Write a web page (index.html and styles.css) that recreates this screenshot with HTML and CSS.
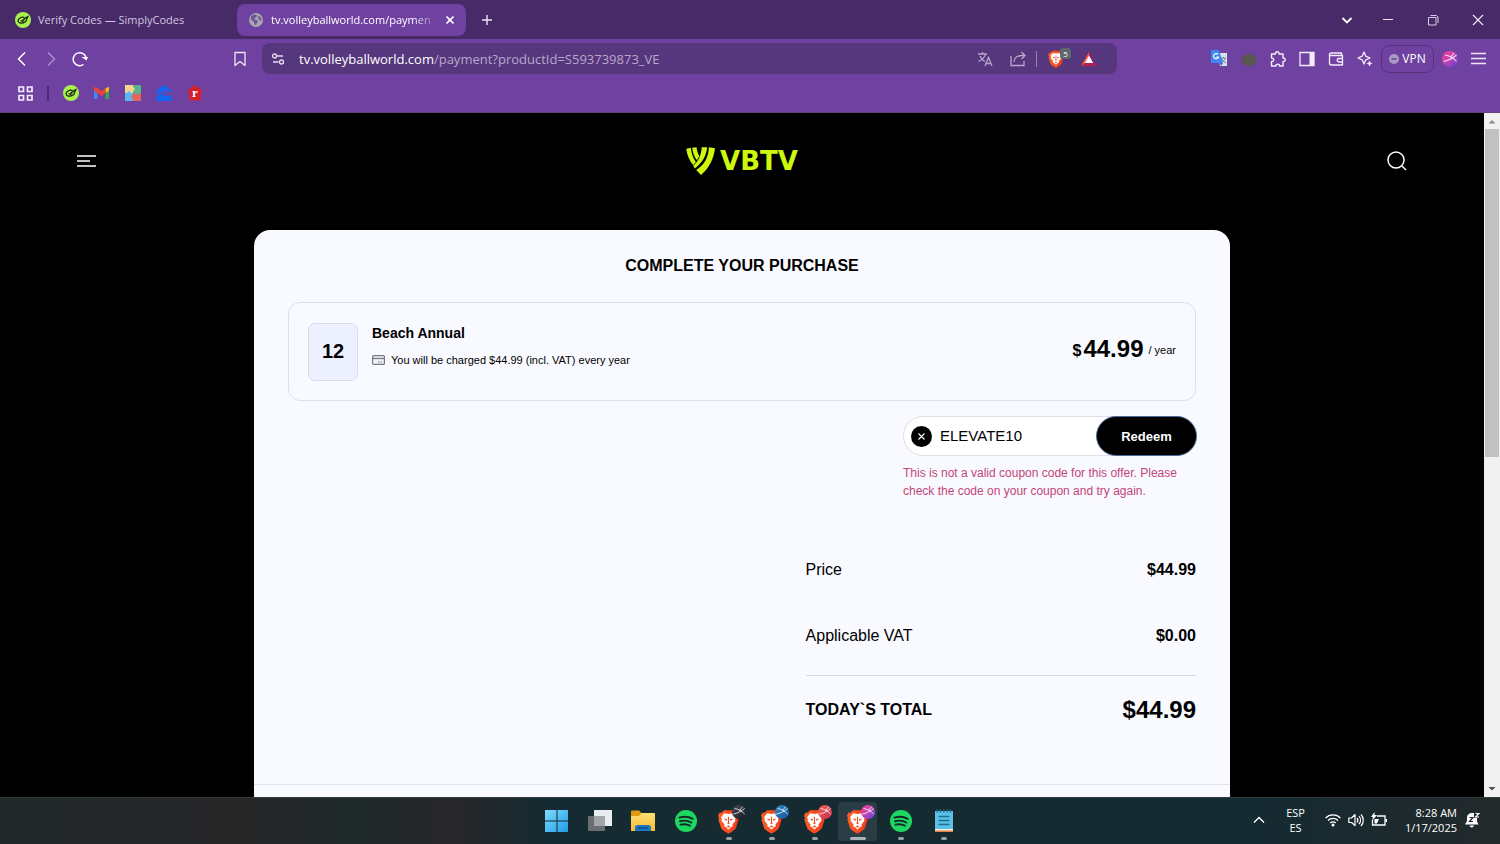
FILE: index.html
```
<!DOCTYPE html>
<html lang="en">
<head>
    <meta charset="UTF-8">
    <meta name="viewport" content="width=device-width, initial-scale=1.0">
    <title>Complete your purchase - VBTV</title>
    <link rel="stylesheet" href="styles.css">
</head>
<body>

<!-- Shared icons -->
<svg class="defs" width="0" height="0">
    <defs>
        <linearGradient id="g-win" x1="0" y1="0" x2="1" y2="1"><stop offset="0" stop-color="#7fdcfb"/><stop offset="1" stop-color="#1f9cea"/></linearGradient>
        <linearGradient id="g-folder" x1="0" y1="0" x2="0" y2="1"><stop offset="0" stop-color="#ffdf75"/><stop offset="1" stop-color="#f7bd2c"/></linearGradient>
        <linearGradient id="g-brave" x1="0" y1="0" x2="1" y2="0"><stop offset="0" stop-color="#ff6021"/><stop offset="1" stop-color="#f0381c"/></linearGradient>
        <linearGradient id="g-black" x1="0" y1="0" x2="1" y2="1"><stop offset="0" stop-color="#4b4c57"/><stop offset="1" stop-color="#17181f"/></linearGradient>
        <linearGradient id="g-blue" x1="0" y1="0" x2="1" y2="1"><stop offset="0" stop-color="#2c8fc0"/><stop offset="1" stop-color="#1c4f9c"/></linearGradient>
        <linearGradient id="g-red" x1="0" y1="0" x2="1" y2="1"><stop offset="0" stop-color="#f0654b"/><stop offset="1" stop-color="#c52e55"/></linearGradient>
        <linearGradient id="g-pink" x1="0" y1="0" x2="1" y2="1"><stop offset="0" stop-color="#fb3f8b"/><stop offset=".45" stop-color="#c843b0"/><stop offset="1" stop-color="#5743dd"/></linearGradient>
        <symbol id="brave" viewBox="0 0 24 28">
            <path fill="url(#g-brave)" d="M7 1h10l3 3 2-.3L24 7l-1 3 .5 2-3 9.500c-.5 1.500-5.500 5-8.500 6.500C9 26.500 4 23 3.500 21.500L.5 12 1 10 0 7l2-3.300L4 4z"/>
            <path fill="#fff" d="M12 5.500l5-.8 3.500 4.300-1 2.500.5 1.500-3.500 4.500.5 2-2.500 1-2.500 3-2.500-3-2.500-1 .5-2L4 13l.5-1.500-1-2.500L7 4.700z"/>
            <path fill="#f4481e" d="M6.500 10.500l4 1-1 2zM17.500 10.500l-4 1 1 2zM11.300 8.500h1.400l-.2 6 1 1.500-1.500 1-1.500-1 1-1.500zM10 19.500l2-.8 2 .8-2 1.500z"/>
        </symbol>
        <symbol id="spotify" viewBox="0 0 24 24">
            <circle cx="12" cy="12" r="12" fill="#1ed760"/>
            <path d="M4.800 8.300c5-1.500 10.500-1 14.500 1.300M5.500 12.300c4.300-1.200 8.800-.7 12.300 1.300M6 16c3.500-.9 7-.6 10.200 1.100" fill="none" stroke="#12272a" stroke-width="2.100" stroke-linecap="round"/>
        </symbol>
        <symbol id="simplycodes" viewBox="0 0 16 16">
            <circle cx="8" cy="8" r="8" fill="#a8f04d"/>
            <path d="M9 5.300C6 4.800 3.300 6.500 3.100 8.600s3 3 5 2.300 3.400-2 3.400-3.500M6 8.700l1.500.8L9 7.500M8 7.700l5-3.400-1.200 2.700" fill="none" stroke="#1c2b12" stroke-width="1.300" stroke-linecap="round" stroke-linejoin="round"/>
        </symbol>
        <symbol id="ball" viewBox="0 0 16 16">
            <path d="M1.500 10.500C6 9.500 11 7 14.500 4M3 4c4 .5 8.500 3 11.500 6.500M8.500 6.500L12 2" fill="none" stroke="#fff" stroke-width="1.100" opacity=".8"/>
        </symbol>
    </defs>
</svg>

<header class="browser">
    <div class="tabs">
        <button class="tab" type="button">
            <svg width="16" height="16"><use href="#simplycodes"/></svg>
            <span class="tab-title">Verify Codes — SimplyCodes</span>
        </button>
        <div class="tab active">
            <svg width="14" height="14" viewBox="0 0 14 14"><circle cx="7" cy="7" r="7" fill="#a9a5b5"/><path d="M2 3l3-1.500 3 .5-.5 2-2 1v1.500L8 7l1 1.500-2 3-1.500.5-.5-3-3-2.500zM10 2.500l2.500 3-.5 2.500-2-1.500-1-2z" fill="#6e5790"/></svg>
            <span class="tab-title">tv.volleyballworld.com/paymen</span>
            <button class="tab-close" type="button" aria-label="Close tab"><svg width="8" height="8" viewBox="0 0 8 8"><path d="M.5.500l7 7M7.500.500l-7 7" stroke="#fff" stroke-width="1.600"/></svg></button>
        </div>
        <button class="icon-btn new-tab" type="button" aria-label="New tab"><svg width="12" height="12" viewBox="0 0 12 12"><path d="M6 1v10M1 6h10" stroke="#eee6f7" stroke-width="1.400"/></svg></button>
        <div class="window-controls">
            <button type="button" aria-label="Search tabs"><svg width="12" height="12" viewBox="0 0 12 12"><path d="M1.500 4L6 8.500 10.500 4" fill="none" stroke="#fff" stroke-width="1.800"/></svg></button>
            <button type="button" aria-label="Minimize"><svg width="12" height="12" viewBox="0 0 12 12"><path d="M1 5.500h10" stroke="#eee6f7"/></svg></button>
            <button type="button" aria-label="Restore"><svg width="12" height="12" viewBox="0 0 12 12"><path d="M3.500 1.500h6l1.500 1.500v6M1.500 3.500h7.500v7.500h-7.500z" fill="none" stroke="#d9cce8" stroke-linejoin="round"/></svg></button>
            <button type="button" aria-label="Close"><svg width="12" height="12" viewBox="0 0 12 12"><path d="M1 1l10 10M11 1L1 11" stroke="#eee6f7" stroke-width="1.200"/></svg></button>
        </div>
    </div>

    <div class="toolbar">
        <div class="nav-buttons">
            <button class="icon-btn" type="button" aria-label="Back"><svg width="16" height="16" viewBox="0 0 16 16"><path d="M11 1.500L4.500 8l6.500 6.500" fill="none" stroke="#fff" stroke-width="1.500"/></svg></button>
            <button class="icon-btn" type="button" aria-label="Forward"><svg width="16" height="16" viewBox="0 0 16 16"><path d="M5 1.500L11.500 8 5 14.500" fill="none" stroke="#a98dc9" stroke-width="1.500"/></svg></button>
            <button class="icon-btn" type="button" aria-label="Reload"><svg width="16" height="16" viewBox="0 0 16 16"><path d="M11.500 13.500A6.500 6.500 0 1 1 14 6.500" fill="none" stroke="#fff" stroke-width="1.500"/><path d="M9.500 6h6.500L14.500 9.500z" fill="#fff"/></svg></button>
            <button class="icon-btn bookmark" type="button" aria-label="Bookmark this page"><svg width="16" height="16" viewBox="0 0 16 16"><path d="M3 1.500h10v13l-5-4-5 4z" fill="none" stroke="#eee6f7" stroke-width="1.300" stroke-linejoin="round"/></svg></button>
        </div>
        <div class="address">
            <button class="icon-btn" type="button" aria-label="Site settings"><svg width="14" height="14" viewBox="0 0 14 14"><g fill="none" stroke="#e6dcf0" stroke-width="1.300"><circle cx="3.500" cy="4" r="2"/><path d="M6 4h6M2 10h5.500"/><circle cx="10.500" cy="10" r="2"/></g></svg></button>
            <a class="url" href="#">tv.volleyballworld.com<span>/payment?productId=S593739873_VE</span></a>
            <div class="address-actions">
                <button class="icon-btn" type="button" aria-label="Translate"><svg width="16" height="16" viewBox="0 0 16 16"><path d="M1 3h9M5.500 1v2M8.500 3C8 6 4.500 9 1.500 10.500M3 5c1 2.500 3 4.500 5 5.500M8 15l3.500-8.500L15 15M9 12.500h5" fill="none" stroke="#b9a8cc" stroke-width="1.300"/></svg></button>
                <button class="icon-btn" type="button" aria-label="Share"><svg width="16" height="16" viewBox="0 0 16 16"><path d="M1 5v9.500h13V10M4 11c0-4 3-6.500 8-6.500h3M11.500 1L15 4.500 11.500 8" fill="none" stroke="#b9a8cc" stroke-width="1.300"/></svg></button>
                <span class="divider"></span>
                <button class="icon-btn shield" type="button" aria-label="Brave Shields"><svg width="16" height="18"><use href="#brave"/></svg><span class="badge">5</span></button>
                <button class="icon-btn" type="button" aria-label="Brave Rewards"><svg width="16" height="14" viewBox="0 0 16 14"><path d="M8 0l8 14H0z" fill="#8f2170"/><path d="M0 14h16l-4-3H4z" fill="#b31d55"/><path d="M0 14l4-3 4-7V0z" fill="#ff5a2b"/><path d="M8 3.500l4.200 7.500H3.800z" fill="#fff"/></svg></button>
            </div>
        </div>
        <div class="extensions">
            <button class="icon-btn" type="button" aria-label="Google Translate"><svg width="17" height="17" viewBox="0 0 17 17"><path d="M7 3h9v13H9z" fill="#dce2ea"/><path d="M10 8h5M12.500 7v1M14 8c0 2-2 4-4 5M11 9c1 2 2 3 4 4" stroke="#66809a" fill="none"/><path d="M0 0h8l4 13H0z" fill="#4285f4"/><path d="M9 13h3l-2 3z" fill="#2859b8"/><path d="M7 4.500A2.500 2.500 0 1 0 7.500 7H5.200" fill="none" stroke="#fff" stroke-width="1.200"/></svg></button>
            <button class="icon-btn" type="button" aria-label="Extension"><svg width="16" height="16" viewBox="0 0 16 16"><path d="M7.500 4V1h1v3c4-1.500 7.500.5 7 5S12 15 8 15 .800 13 .500 9s3-6.500 7-5z" fill="#59554f"/><path d="M4 8l2 1M12 8l-2 1M5 12h6" stroke="#68604c"/></svg></button>
            <button class="icon-btn" type="button" aria-label="Extensions"><svg width="16" height="16" viewBox="0 0 16 16"><path d="M1.500 3h4c-.5-3 4-3 3.500 0h4v4c3-.5 3 4 0 3.500V15H9.500c.3-2.500-3.700-2.500-3.500 0H1.500v-4.500c3 .3 3-3.700 0-3.500z" fill="none" stroke="#f4ecfb" stroke-width="1.400" stroke-linejoin="round"/></svg></button>
            <button class="icon-btn" type="button" aria-label="Side panel"><svg width="16" height="16" viewBox="0 0 16 16"><path d="M1 1.500h14v13H1z" fill="none" stroke="#f4ecfb" stroke-width="1.300"/><path d="M10.500 1.500H15v13h-4.500z" fill="#f4ecfb"/></svg></button>
            <button class="icon-btn" type="button" aria-label="Wallet"><svg width="16" height="16" viewBox="0 0 16 16"><path d="M1.500 4.500V12c0 1.500.5 2 2 2h11v-9.500zM1.500 4.500c-.5-2 .5-2.500 2-2.500h10v2.500M15 7.500h-4c-2.500 0-2.500 3.500 0 3.500h4" fill="none" stroke="#f4ecfb" stroke-width="1.300" stroke-linejoin="round"/></svg></button>
            <button class="icon-btn" type="button" aria-label="Leo AI"><svg width="16" height="16" viewBox="0 0 16 16"><path d="M7 1l1.800 4.200L13 7 8.800 8.800 7 13 5.200 8.800 1 7l4.200-1.800z" fill="none" stroke="#f4ecfb" stroke-width="1.300" stroke-linejoin="round"/><path d="M12.500 9.500l.9 2.100 2.100.9-2.100.9-.9 2.100-.9-2.100-2.100-.9 2.100-.9z" fill="#f4ecfb"/></svg></button>
            <button class="vpn" type="button"><svg width="10" height="10" viewBox="0 0 10 10"><circle cx="5" cy="5" r="5" fill="#a99bc4"/><path d="M2.500 5h5" stroke="#5e3b86" stroke-width="1.400"/></svg>VPN</button>
            <button class="icon-btn" type="button" aria-label="Profile"><svg width="16" height="16" viewBox="0 0 16 16"><circle cx="8" cy="8" r="8" fill="url(#g-pink)"/><use href="#ball" width="16" height="16"/></svg></button>
            <button class="icon-btn" type="button" aria-label="Menu"><svg width="15" height="13" viewBox="0 0 15 13"><path d="M0 1.500h15M0 6.500h15M0 11.500h15" stroke="#eee6f7" stroke-width="1.300"/></svg></button>
        </div>
    </div>

    <nav class="bookmarks">
        <a href="#" aria-label="All bookmarks"><svg width="15" height="15" viewBox="0 0 15 15"><path d="M1 1h4.500v4.500H1zM9.500 1H14v4.500H9.500zM1 9.500h4.500V14H1zM9.500 9.500H14V14H9.500z" fill="none" stroke="#f4ecfb" stroke-width="1.700"/></svg></a>
        <span class="divider"></span>
        <a href="#" aria-label="SimplyCodes"><svg width="16" height="16"><use href="#simplycodes"/></svg></a>
        <a href="#" aria-label="Gmail"><svg width="15" height="12" viewBox="0 0 15 12"><path d="M0 1.500l3.500 2.500v8H0z" fill="#4285f4"/><path d="M15 1.500L11.500 4v8H15z" fill="#34a853"/><path d="M11.500 1L15 0v3.500L11.500 6z" fill="#fbbc04"/><path d="M0 0l3.500 1 4 3.200 4-3.200v5l-4 3-4-3L0 3.500z" fill="#ea4335"/></svg></a>
        <a href="#" aria-label="Puzzles"><svg width="16" height="16" viewBox="0 0 16 16"><path d="M0 0h8v8H0z" fill="#f6d58b"/><path d="M8 0h8v8H8z" fill="#56b68b"/><path d="M0 8h8v8H0z" fill="#5bb8f5"/><path d="M8 8h8v8H8z" fill="#e8645a"/><circle cx="8" cy="4" r="1.800" fill="#f6d58b"/><circle cx="12" cy="8" r="1.800" fill="#56b68b"/><circle cx="8" cy="12" r="1.800" fill="#e8645a"/><circle cx="4" cy="8" r="1.800" fill="#5bb8f5"/></svg></a>
        <a href="#" aria-label="Zillow"><svg width="16" height="16" viewBox="0 0 16 16"><path d="M8 0l7.500 5.500V8L11 5.500C7.500 6 4 7.500.500 9.500V5.500zM.5 11.500C4 9 7 7.500 10 7l-3.500 4.500c3-1 6-1.300 9-.8V16H.5z" fill="#1267f2"/></svg></a>
        <a href="#" aria-label="Redfin"><svg width="16" height="16" viewBox="0 0 16 16"><path d="M8 0l7.500 5.500V7H14v8.500H2V7H.5V5.500z" fill="#d4222c"/><text x="5" y="12" class="redfin-r">r</text></svg></a>
    </nav>
</header>

<div class="viewport">
    <main class="page">
        <div class="site-header">
            <button class="site-btn" type="button" aria-label="Open menu"><svg width="20" height="12" viewBox="0 0 20 12"><path d="M0 1h19M0 6h13M0 11h19" stroke="#fff" stroke-width="1.600"/></svg></button>
            <a class="logo" href="#">
                <svg width="30" height="28" viewBox="0 0 86 82"><path fill="#cdf80d" d="M0 5l13-3c2 17 7 30 15 42l-8 9C8 38 2 23 0 5zM17 2l13-1c1 10 4 18 8 25l-7 13C23 28 19 16 17 2zM45 1h16c-2 24-13 43-30 57l-6 5-5-8C35 43 44 24 45 1zM66 1l18 3c-4 32-17 58-41 78l-14-15C52 54 65 31 66 1z"/></svg>
                <span>VBTV</span>
            </a>
            <button class="site-btn" type="button" aria-label="Search"><svg width="20" height="20" viewBox="0 0 20 20"><circle cx="9" cy="9" r="8" fill="none" stroke="#fff" stroke-width="1.500"/><path d="M15 15l4 4" stroke="#fff" stroke-width="1.500"/></svg></button>
        </div>

        <section class="card">
            <div class="card-body">
                <h1>COMPLETE YOUR PURCHASE</h1>

                <div class="product">
                    <div class="months">12</div>
                    <div class="product-info">
                        <h2>Beach Annual</h2>
                        <p><svg width="13" height="10" viewBox="0 0 13 10"><rect x=".6" y=".6" width="11.800" height="8.800" rx="1" fill="#f3f4fa" stroke="#777986" stroke-width="1.200"/><path d="M1 3.500h11" stroke="#777986" stroke-width="1.300"/><path d="M6 7h1.500M8.500 7H10" stroke="#777986"/></svg>You will be charged $44.99 (incl. VAT) every year</p>
                    </div>
                    <div class="product-price"><span class="currency">$</span><strong>44.99</strong><span class="period">/ year</span></div>
                </div>

                <form class="coupon" id="coupon-form">
                    <div class="coupon-field">
                        <button class="clear" type="button" aria-label="Clear coupon"><svg width="7" height="7" viewBox="0 0 7 7"><path d="M.5.500l6 6M6.500.500l-6 6" stroke="#fff" stroke-width="1.100"/></svg></button>
                        <input type="text" id="coupon" name="coupon" value="ELEVATE10" aria-label="Coupon code" spellcheck="false">
                        <button class="redeem" type="submit">Redeem</button>
                    </div>
                    <p class="error">This is not a valid coupon code for this offer. Please check the code on your coupon and try again.</p>
                </form>

                <dl class="summary">
                    <div class="row"><dt>Price</dt><dd>$44.99</dd></div>
                    <div class="row"><dt>Applicable VAT</dt><dd>$0.00</dd></div>
                    <div class="row total"><dt>TODAY`S TOTAL</dt><dd>$44.99</dd></div>
                </dl>
            </div>
            <div class="card-footer"></div>
        </section>
    </main>
    <div class="scrollbar">
        <svg width="16" height="16" viewBox="0 0 16 16"><path d="M4.500 10.500L8 7l3.500 3.500z" fill="#8b8b8b"/></svg>
        <div class="thumb"></div>
        <svg width="16" height="16" viewBox="0 0 16 16"><path d="M4.500 6L8 9.500 11.500 6z" fill="#505050"/></svg>
    </div>
</div>

<footer class="taskbar">
    <div class="apps">
        <button type="button" aria-label="Start"><svg width="24" height="24" viewBox="0 0 24 24"><path d="M0 1h11.500v10.500H0zM12.500 1H23v10.500H12.500zM0 12.500h11.500V23H0zM12.500 12.500H23V23H12.500z" fill="url(#g-win)"/></svg></button>
        <button type="button" aria-label="Task view"><svg width="24" height="24" viewBox="0 0 24 24"><path d="M6 1h18v16H6z" fill="#e9edef"/><path d="M0 7h17v15H0z" fill="#6c6f72"/><path d="M6 7h11v10H6z" fill="#a3a6a8"/></svg></button>
        <button type="button" aria-label="File Explorer"><svg width="24" height="24" viewBox="0 0 24 24"><path d="M0 3c0-1 .5-1.500 1.500-1.500H8L10.500 4H22v5H0z" fill="#dd9a12"/><path d="M0 7h8l2.500-3H23c.7 0 1 .5 1 1v17H0z" fill="url(#g-folder)"/><path d="M4 22v-3.500c0-1.500 1-2.500 2.500-2.500h11c1.500 0 2.500 1 2.500 2.500V22z" fill="#1975c5"/><path d="M7 19h10" stroke="#0c4d8c" stroke-width="1.500"/></svg></button>
        <button type="button" aria-label="Spotify"><svg width="22" height="22"><use href="#spotify"/></svg></button>
        <button type="button" class="running" aria-label="Brave, profile 1"><svg width="34" height="32" viewBox="0 0 34 32"><use href="#brave" x="6" y="4" width="21" height="25"/><circle cx="27" cy="7" r="7" fill="url(#g-black)"/><use href="#ball" x="20" y="0" width="14" height="14"/></svg></button>
        <button type="button" class="running" aria-label="Brave, profile 2"><svg width="34" height="32" viewBox="0 0 34 32"><use href="#brave" x="6" y="4" width="21" height="25"/><circle cx="27" cy="7" r="7" fill="url(#g-blue)"/><use href="#ball" x="20" y="0" width="14" height="14"/></svg></button>
        <button type="button" class="running" aria-label="Brave, profile 3"><svg width="34" height="32" viewBox="0 0 34 32"><use href="#brave" x="6" y="4" width="21" height="25"/><circle cx="27" cy="7" r="7" fill="url(#g-red)"/><use href="#ball" x="20" y="0" width="14" height="14"/></svg></button>
        <button type="button" class="running current" aria-label="Brave, profile 4"><svg width="34" height="32" viewBox="0 0 34 32"><use href="#brave" x="6" y="4" width="21" height="25"/><circle cx="27" cy="7" r="7" fill="url(#g-pink)"/><use href="#ball" x="20" y="0" width="14" height="14"/></svg></button>
        <button type="button" class="running" aria-label="Spotify"><svg width="22" height="22"><use href="#spotify"/></svg></button>
        <button type="button" class="running" aria-label="Notepad"><svg width="20" height="24" viewBox="0 0 20 24"><path d="M1 2h18v20H1z" fill="#5ac1e4"/><path d="M1 20h18v2H1z" fill="#f0efec"/><path d="M1 21.500h18V23H1z" fill="#e2803c"/><path d="M2.500 2h15" stroke="#256f96" stroke-width="3" stroke-dasharray="1.500 1.800"/><path d="M4.500 7.500h11M4.500 11.500h11M4.500 15.500h11" stroke="#1d6d98" stroke-width="1.500"/></svg></button>
    </div>
    <div class="tray">
        <button type="button" aria-label="Hidden icons"><svg width="12" height="12" viewBox="0 0 12 12"><path d="M1 8.500l5-5 5 5" fill="none" stroke="#fff" stroke-width="1.400"/></svg></button>
        <button type="button" class="lang">ESP<br>ES</button>
        <button type="button" class="status" aria-label="Network, volume and battery">
            <svg width="16" height="16" viewBox="0 0 16 16"><g fill="none" stroke="#fff" stroke-width="1.300"><path d="M.6 6C4.500 1.800 11.500 1.800 15.400 6"/><path d="M3 8.500c2.800-2.900 7.200-2.900 10 0"/><path d="M5.300 11c1.500-1.500 3.900-1.500 5.400 0"/></g><circle cx="8" cy="13" r="1.500" fill="#fff"/></svg>
            <svg width="16" height="16" viewBox="0 0 16 16"><g fill="none" stroke="#fff" stroke-width="1.200" stroke-linejoin="round"><path d="M.8 6v4.500h2.700L7 13.500V2.500L3.500 6z"/><path d="M9 6c1 1.200 1 3.300 0 4.500M11 4.200c2 2.200 2 5.600 0 8M13 2.500c3 3 3 8.300 0 11.500"/></g></svg>
            <svg width="17" height="16" viewBox="0 0 17 16"><path d="M6 4h8v9H1.500V8" fill="none" stroke="#fff" stroke-width="1.300"/><path d="M14.500 7H16v3h-1.500zM3.500 7h4.500l-2 4.500H3.500z" fill="#fff"/><path d="M3.500 0L0 5h2l-1 4 5-6H3.500z" fill="#fff"/></svg>
        </button>
        <button type="button" class="clock">8:28 AM<br>1/17/2025</button>
        <button type="button" aria-label="Notifications"><svg width="15" height="16" viewBox="0 0 15 16"><path d="M7 1c-3.500 0-5 2.500-5 5v3L0 12.500h13.500L12 9.500V6L9 1zM4.500 13.500c.5 2.500 4 2.500 4.500 0z" fill="#fff"/><path d="M4.500 5.500h3.500l-3.500 4H8" fill="none" stroke="#22292b" stroke-width="1.200"/><path d="M9 0h6v6H9z" fill="#22292b"/><path d="M10.500 1.500H14l-3.500 3.500H14" fill="none" stroke="#fff" stroke-width="1.100"/></svg></button>
    </div>
</footer>

</body>
</html>
```
FILE: styles.css
```
* {
    box-sizing: border-box;
}
body {
    margin: 0;
    height: 100vh;
    display: flex;
    flex-direction: column;
    overflow: hidden;
    background-color: #000;
    font-family: 'Liberation Sans', Arial, sans-serif;
}
button {
    padding: 0;
    border: none;
    background: none;
    color: inherit;
    font: inherit;
    cursor: pointer;
}
svg {
    display: block;
    flex: none;
}
a {
    color: inherit;
    text-decoration: none;
}
.defs {
    position: absolute;
}

/* Browser window */
.browser {
    flex: none;
    background-color: #6f41a1;
    border-bottom: 1px solid #604377;
    color: #fff;
    font-family: 'Open Sans', 'Noto Sans', sans-serif;
}
.tabs {
    display: flex;
    align-items: center;
    height: 39px;
    padding-left: 6px;
    background-color: #472a67;
}
.tab {
    display: flex;
    align-items: center;
    gap: 7px;
    width: 229px;
    height: 32px;
    padding: 0 9px;
    font-size: 11px;
    color: #d3c6e0;
    text-align: left;
}
.tab.active {
    margin-left: 2px;
    padding: 0 12px;
    gap: 8px;
    border-radius: 8px;
    background-color: #6f41a1;
    color: #fff;
}
.tab-title {
    flex: 1;
    white-space: nowrap;
}
.tab.active .tab-title {
    mask-image: linear-gradient(to right, #000 85%, transparent);
}
.icon-btn {
    display: flex;
    align-items: center;
    justify-content: center;
    flex: none;
    width: 29px;
    height: 28px;
}
.new-tab {
    margin-left: 6px;
}
.window-controls {
    display: flex;
    margin-left: auto;
}
.window-controls button {
    display: flex;
    align-items: center;
    justify-content: center;
    width: 45px;
    height: 39px;
}
.window-controls button:first-child {
    width: 36px;
}
.toolbar {
    display: flex;
    align-items: center;
    height: 39px;
    padding: 0 7px;
}
.nav-buttons {
    display: flex;
    flex: none;
    width: 247px;
}
.bookmark {
    margin-left: auto;
}
.address {
    display: flex;
    align-items: center;
    flex: 1;
    height: 31px;
    margin: 0 88px 0 8px;
    padding: 0 14px 0 1px;
    border-radius: 8px;
    background-color: #56367c;
}
.url {
    flex: 1;
    margin-left: 7px;
    font-size: 13px;
    white-space: nowrap;
}
.url span {
    color: #b9a8cc;
}
.address-actions {
    display: flex;
    align-items: center;
    gap: 4px;
}
.address-actions .divider {
    width: 1px;
    height: 16px;
    background-color: #9882b0;
}
.shield {
    position: relative;
}
.badge {
    position: absolute;
    top: 3px;
    right: -1px;
    width: 11px;
    height: 11px;
    border-radius: 3px;
    background-color: #5f6670;
    font-size: 8px;
    line-height: 11px;
    text-align: center;
}
.extensions {
    display: flex;
    align-items: center;
}
.vpn {
    display: flex;
    align-items: center;
    justify-content: center;
    gap: 3px;
    width: 53px;
    height: 28px;
    margin: 0 1px 0 2px;
    border: 1px solid #56327d;
    border-radius: 8px;
    font-size: 12px;
}
.bookmarks {
    display: flex;
    align-items: center;
    height: 34px;
    padding: 0 0 4px 10px;
}
.bookmarks a {
    display: flex;
    justify-content: center;
    width: 31px;
}
.bookmarks .divider {
    width: 2px;
    height: 15px;
    margin: 0 6px;
    background-color: #4d2a76;
}
.redfin-r {
    font: bold 13px 'Liberation Serif', serif;
    fill: #fff;
}

/* Page */
.viewport {
    display: flex;
    flex: 1;
    min-height: 0;
}
.page {
    flex: 1;
    display: flex;
    flex-direction: column;
    overflow: hidden;
    background-color: #000;
}
.site-header {
    display: flex;
    align-items: center;
    justify-content: space-between;
    flex: none;
    height: 95px;
    padding: 0 77px;
}
.logo {
    display: flex;
    align-items: center;
    gap: 4px;
    color: #cdf80d;
    font: bold 26px 'DejaVu Sans', sans-serif;
}
.card {
    flex: 1 0 auto;
    display: flex;
    flex-direction: column;
    width: 100%;
    max-width: 976px;
    margin: 22px auto 0;
    border-radius: 16px 16px 0 0;
    background-color: #f9faff;
    color: #000;
}
.card-body {
    padding: 26px 34px 41px;
}
.card-footer {
    flex: 1;
    border-top: 1px solid #e2e3ea;
}
h1 {
    margin: 0 0 27px;
    font-size: 16px;
    line-height: 19px;
    text-align: center;
}
.product {
    display: flex;
    align-items: center;
    height: 99px;
    padding: 0 19px;
    border: 1px solid #dfe0e8;
    border-radius: 12px;
}
.months {
    display: flex;
    align-items: center;
    justify-content: center;
    width: 50px;
    height: 58px;
    border: 1px solid #d9daf0;
    border-radius: 7px;
    background-color: #ecf0ff;
    font-size: 20px;
    font-weight: bold;
}
.product-info {
    flex: 1;
    align-self: flex-start;
    margin: 22px 0 0 14px;
}
.product-info h2 {
    margin: 0 0 11px;
    font-size: 14px;
    line-height: 16px;
}
.product-info p {
    display: flex;
    align-items: center;
    gap: 6px;
    margin: 0;
    font-size: 11px;
    line-height: 16px;
}
.product-price {
    display: flex;
    align-items: center;
    padding-bottom: 5px;
}
.product-price .currency {
    margin: 4px 2px 0 0;
    font-size: 16px;
    font-weight: bold;
}
.product-price strong {
    font-size: 24px;
}
.product-price .period {
    margin: 2px 0 0 5px;
    font-size: 11px;
}
.coupon {
    width: 293px;
    margin: 15px 0 0 auto;
}
.coupon-field {
    display: flex;
    align-items: center;
    height: 40px;
    padding-left: 7px;
    border: 1px solid #dfe0e8;
    border-radius: 20px;
    background-color: #fff;
}
.clear {
    display: flex;
    align-items: center;
    justify-content: center;
    width: 21px;
    height: 21px;
    border-radius: 50%;
    background-color: #000;
}
.coupon-field input {
    flex: 1;
    min-width: 0;
    padding: 0 8px 2px;
    border: none;
    background: none;
    font: 15px 'Liberation Sans', Arial, sans-serif;
    outline: none;
}
.redeem {
    width: 101px;
    height: 40px;
    margin-right: -2px;
    border: 1px solid #4a6c9c;
    border-radius: 20px;
    background-color: #000;
    color: #fff;
    font-size: 13px;
    font-weight: bold;
}
.error {
    margin: 8px 0 0;
    color: #c2457a;
    font-size: 12px;
    line-height: 18px;
}
.summary {
    width: 43%;
    margin: 37px 0 0 auto;
}
.row {
    display: flex;
    align-items: center;
    justify-content: space-between;
    height: 66px;
    font-size: 16px;
}
.row dd {
    margin: 0;
    font-weight: bold;
}
.row.total {
    height: 68px;
    margin-top: 6px;
    border-top: 1px solid #d8d9e0;
    font-weight: bold;
}
.row.total dd {
    font-size: 24px;
}

/* Scrollbar */
.scrollbar {
    display: flex;
    flex-direction: column;
    flex: none;
    width: 16px;
    background-color: #f1f1f1;
}
.thumb {
    width: 14px;
    height: 48%;
    margin: 0 1px auto;
    background-color: #c1c1c1;
}

/* Taskbar */
.taskbar {
    display: grid;
    grid-template-columns: 1fr auto 1fr;
    align-items: center;
    flex: none;
    height: 47px;
    border-top: 1px solid #333b3d;
    background: linear-gradient(to right, #21282a, #262627 16%, #1e292b 24%, #27272a 30%, #152a31 36%, #162a31 85%, #22292b);
    color: #fff;
    font-family: 'Open Sans', 'Noto Sans', sans-serif;
    font-size: 11px;
    line-height: 15px;
}
.apps {
    grid-column: 2;
    display: flex;
    gap: 4px;
}
.apps button {
    position: relative;
    display: flex;
    align-items: center;
    justify-content: center;
    width: 39px;
    height: 39px;
    border-radius: 4px;
}
.apps .current {
    background-color: #2b3d44;
}
.running::after {
    content: "";
    position: absolute;
    bottom: 1px;
    left: 50%;
    width: 6px;
    height: 3px;
    margin-left: -3px;
    border-radius: 2px;
    background-color: #98a1a5;
}
.running.current::after {
    width: 16px;
    margin-left: -8px;
    background-color: #a9b3b8;
}
.tray {
    display: flex;
    align-items: center;
    justify-content: flex-end;
    padding: 0 20px 2px 0;
}
.lang {
    margin-left: 21px;
}
.status {
    display: flex;
    gap: 7px;
    margin: 0 17px 0 20px;
}
.clock {
    margin-right: 8px;
    text-align: right;
}
```
